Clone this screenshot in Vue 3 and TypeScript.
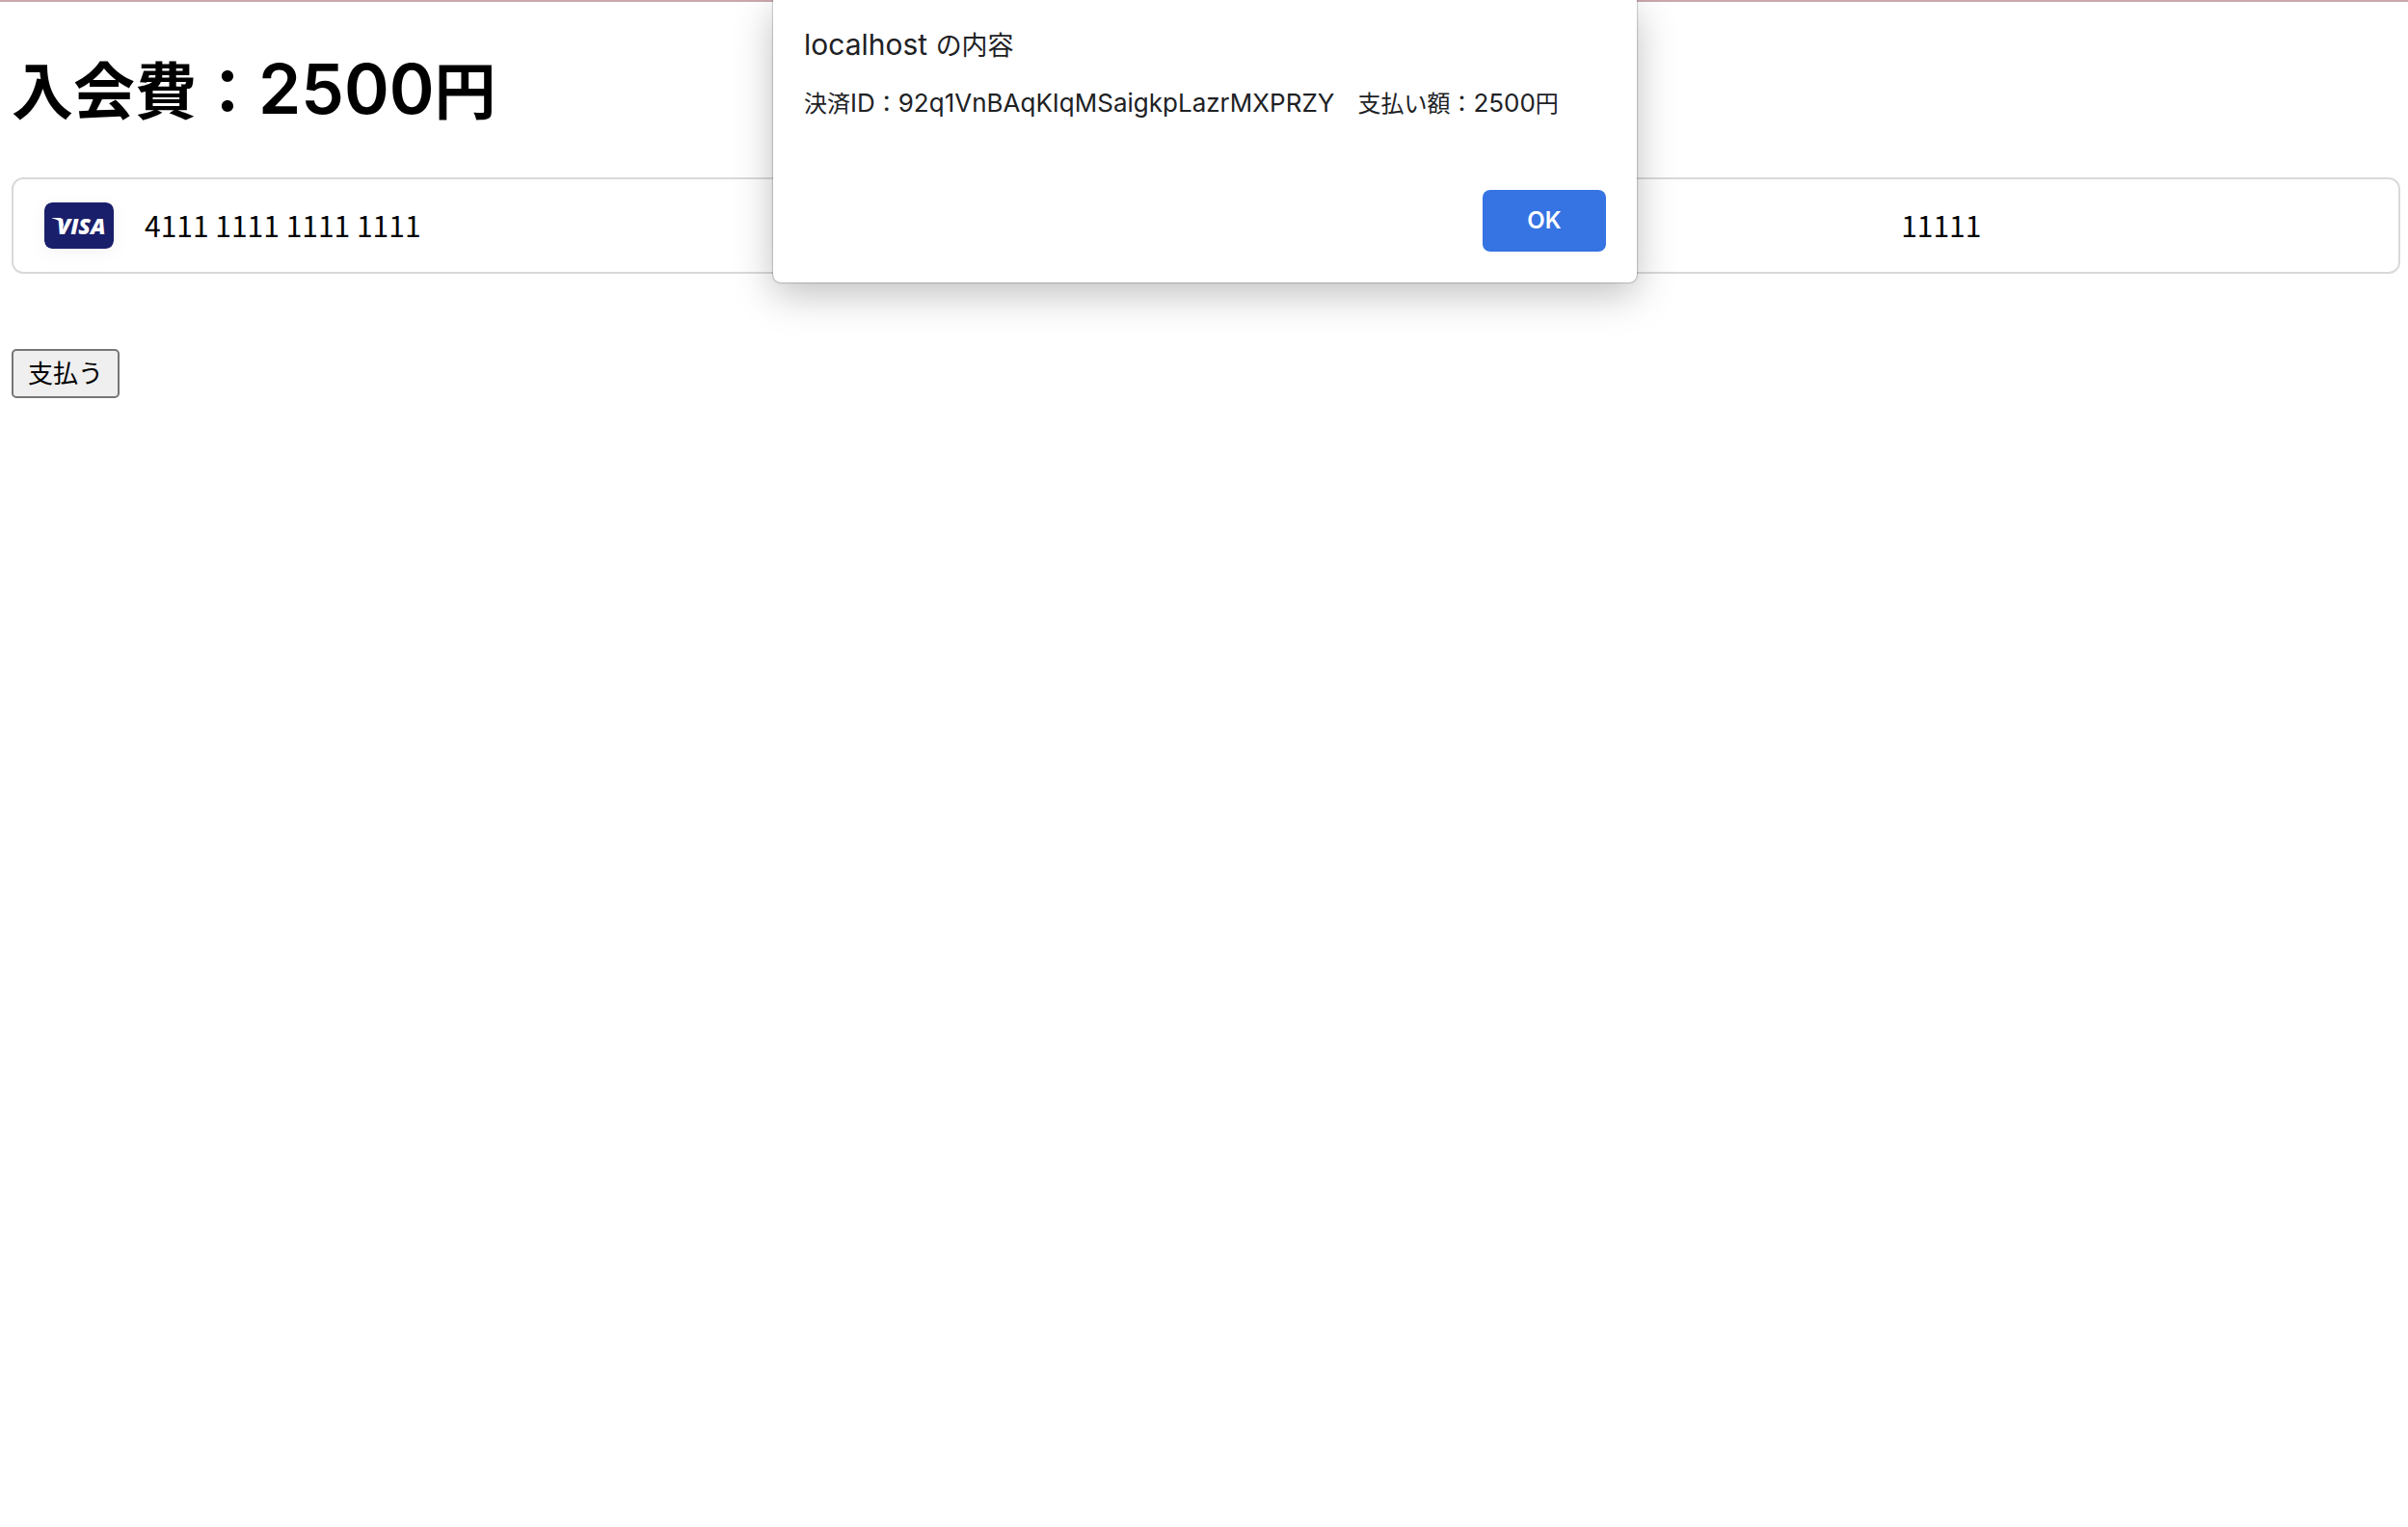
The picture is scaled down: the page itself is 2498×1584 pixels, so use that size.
<script setup lang="ts">
import { ref } from 'vue'

const fee = 2500
const paymentId = '92q1VnBAqKIqMSaigkpLazrMXPRZY'
const cardNumber = ref('4111 1111 1111 1111')
const postalCode = ref('11111')
const alertOpen = ref(true)
</script>

<template>
  <main class="page">
    <h1 class="title">入会費：<span class="amount">{{ fee }}</span>円</h1>

    <form @submit.prevent="alertOpen = true">
      <div class="card-field">
        <svg class="brand" viewBox="0 0 72 48" role="img" aria-label="VISA">
          <rect width="72" height="48" rx="8" fill="#1a1f6b" />
          <text x="13" y="33" class="brand-name">VISA</text>
          <path d="M8 16h8c1.800 0 2.600 1 3 2.500l1.500 8C18.500 21 14 17.500 8 16.600z" fill="#fff" />
        </svg>
        <input v-model="cardNumber" class="card-input" type="text" aria-label="カード番号" />
        <input v-model="postalCode" class="card-input" type="text" aria-label="郵便番号" />
      </div>
      <button class="pay" type="submit">支払う</button>
    </form>
  </main>

  <div v-if="alertOpen" class="overlay">
    <div class="alert" role="alertdialog" aria-labelledby="alert-title">
      <h2 id="alert-title" class="alert-title"><span class="alert-host">localhost </span>の内容</h2>
      <p class="alert-text">決済<span class="latin">ID</span>：<span class="latin">{{ paymentId }}</span>　支払い額：<span class="latin">{{ fee }}</span>円</p>
      <div class="alert-actions">
        <button class="ok" type="button" @click="alertOpen = false">OK</button>
      </div>
    </div>
  </div>
</template>

<style>
body {
  background: #fff;
}
</style>

<style scoped>
.page {
  border-top: 2px solid #c8a8ac;
  padding: 40px 8px 0 12px;
  font-family: "Noto Sans CJK JP", sans-serif;
  color: #000;
}
.title {
  margin: 0 0 46px;
  font-size: 64px;
  line-height: 96px;
  font-weight: 700;
}
.amount {
  font-family: Inter, sans-serif;
  font-size: 71px;
  line-height: 72px;
  font-weight: 600;
}
.card-field {
  display: grid;
  grid-template-columns: 72px 37fr 10fr;
  align-items: center;
  gap: 32px;
  box-sizing: border-box;
  height: 100px;
  padding: 0 32px;
  border: 2px solid #d9d9d9;
  border-radius: 12px;
}
.brand {
  width: 72px;
  height: 48px;
  border-radius: 8px;
  box-shadow: 0 4px 20px rgba(0, 0, 0, 0.05);
}
.brand-name {
  fill: #fff;
  font: italic 800 23px "Open Sans", sans-serif;
}
.card-input {
  min-width: 0;
  padding: 0 0 2px;
  border: 0;
  outline: 0;
  background: transparent;
  color: #000;
  font: 30px/48px "Noto Sans CJK JP", sans-serif;
}
.pay {
  display: block;
  box-sizing: border-box;
  height: 51px;
  margin-top: 78px;
  padding: 0 15px 3px;
  border: 2px solid #767676;
  border-radius: 5px;
  background: #efefef;
  color: #000;
  font: 26px/40px "Noto Sans CJK JP", sans-serif;
}
.overlay {
  position: absolute;
  top: 0;
  left: 2px;
  right: 0;
  display: flex;
  justify-content: center;
}
.alert {
  box-sizing: border-box;
  width: 896px;
  padding: 26px 32px 32px;
  border-radius: 0 0 8px 8px;
  background: #fff;
  box-shadow: 0 0 2px rgba(0, 0, 0, 0.6), 0 12px 40px rgba(0, 0, 0, 0.25);
  color: #202124;
  font-family: "Noto Sans CJK JP", sans-serif;
}
.alert-title {
  margin: 0 0 20px;
  font-size: 27px;
  line-height: 40px;
  font-weight: 400;
}
.alert-host {
  font-family: Inter, sans-serif;
  font-size: 30px;
  line-height: 40px;
}
.alert-text {
  margin: 0;
  font-size: 24px;
  line-height: 40px;
  white-space: nowrap;
}
.latin {
  font-family: Inter, sans-serif;
  font-size: 26px;
  line-height: 40px;
}
.alert-actions {
  display: flex;
  justify-content: flex-end;
  margin-top: 70px;
}
.ok {
  width: 128px;
  height: 64px;
  padding: 0;
  border: 0;
  border-radius: 8px;
  background: #3574e2;
  color: #fff;
  font: 600 24px/32px Inter, sans-serif;
}
</style>
